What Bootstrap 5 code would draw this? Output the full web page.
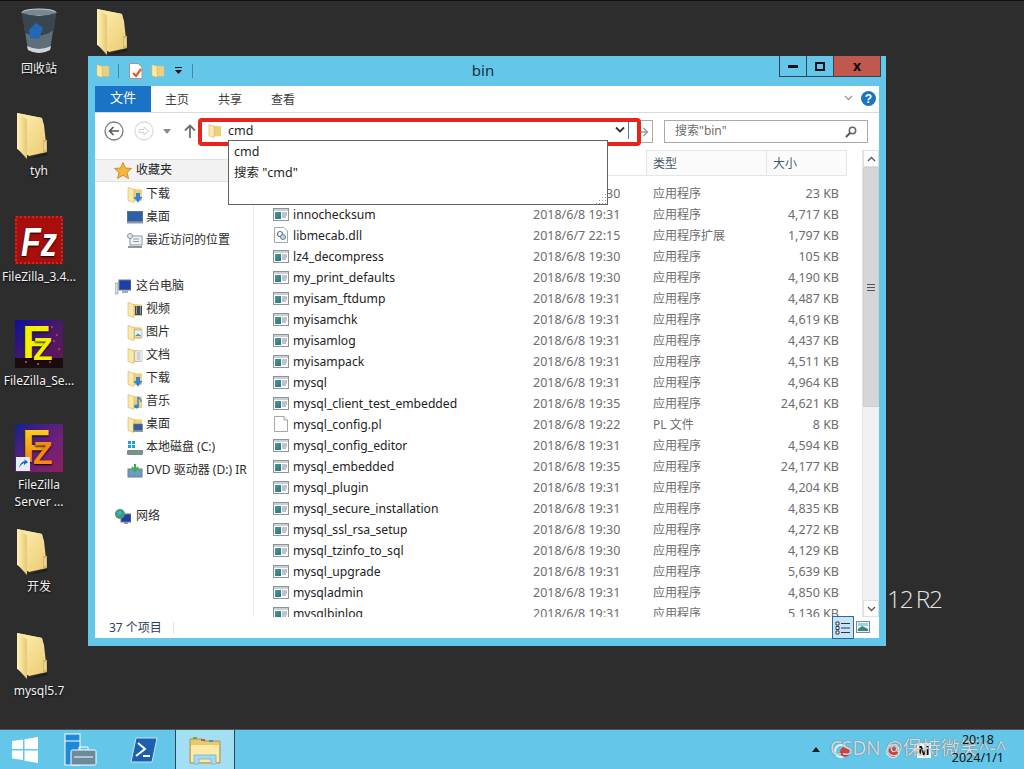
<!DOCTYPE html>
<html lang="zh-CN">
<head>
<meta charset="utf-8">
<title>bin</title>
<link href="https://cdn.jsdelivr.net/npm/bootstrap@5.3.0/dist/css/bootstrap.min.css" rel="stylesheet">
<style>
html,body{height:100%;margin:0;overflow:hidden}
body{background:#2d2d2d;font-family:"Noto Sans","Noto Sans CJK SC",sans-serif;font-size:12.5px;line-height:1.2;color:#1e1e1e;position:relative;width:1024px;height:769px}
.topline{height:1px;background:#111}
.dk{position:absolute;left:0;width:78px;text-align:center;color:#f2f2f2;font-size:12px;line-height:17px;text-shadow:0 1px 2px #000}
.dk svg{display:block;margin:0 auto 4px}
.dk .dfo{margin:0 0 3px 16px}
.p1{top:8px}.p2{top:113px}.p3{top:216px}.p4{top:320px}.p5{top:424px}.p6{top:529px}.p7{top:633px}
.dk-free{position:absolute;left:96px;top:9px}
.win{position:absolute;left:88px;top:56px;width:798px;height:590px;background:#64c7e9;padding:0 7px 8px;display:flex;flex-direction:column}
.w-title{height:30px;position:relative;flex:none}
.w-qa{position:absolute;left:1px;top:7px}
.w-sep{width:1px;height:14px;background:#3f8aa8}
.q1{margin-left:8px}.q2{margin-left:10px}.q3{margin-left:8px}.q4{margin-left:9px}.q5{margin-left:9px}
.w-name{text-align:center;font-size:15px;line-height:28px;color:#14343f;padding-right:8px}
.w-ctl{position:absolute;right:-2px;top:0;height:21px;border:1px solid #2c4756;border-top:0;display:flex}
.w-ctl span{display:flex;align-items:center;justify-content:center;height:20px;border-right:1px solid #2c4756}
.w-ctl .c1{width:27px}.w-ctl .c2{width:27px}.w-ctl .c3{width:46px;border:0;background:#c0584f;color:#111;font-weight:700;font-size:14px}
.w-body{flex:1;background:#fff;display:flex;flex-direction:column;min-height:0}
.r-tabs{height:27px;border-bottom:1px solid #dadbdc;flex:none;position:relative;display:flex;align-items:stretch}
.r-file{width:56px;height:26px;background:#1a73c4;color:#fff;font-size:13px;display:flex;align-items:center;justify-content:center;padding-bottom:2px}
.r-tab{color:#3c3c3c;position:absolute;top:7px;font-size:12px}
.t1{left:70px}.t2{left:123px}.t3{left:176px}
.r-help{position:absolute;right:3px;top:5px}
.r-chev{position:absolute;right:26px;top:9px}
.a-row{height:37px;flex:none;position:relative}
.a-box{position:absolute;left:107px;top:8px;width:426px;height:19px;display:flex;align-items:center;padding-left:6px;gap:6px;font-size:12.5px}
.a-go{position:absolute;left:540px;top:7px;width:18px;height:23px;border:1px solid #a9a9a9;border-left:0}
.a-goi{position:absolute;left:3px;top:6px}
.a-search{position:absolute;left:569px;top:7px;width:204px;height:23px;border:1px solid #a9a9a9;color:#6d6d6d;padding:3px 10px;font-size:12px;display:flex;justify-content:space-between;align-items:center}
.a-red{position:absolute;left:103px;top:5px;width:443px;height:28px;border:4px solid #e8231b;border-radius:4px}
.a-drop{position:absolute;left:520px;top:13px}
.a-div{position:absolute;left:533px;top:9px;width:1px;height:17px;background:#3f7fb3}
.n-svg{position:absolute}
.n1{left:9px;top:8px}.n2{left:39px;top:8px}.n3{left:68px;top:16px}.n4{left:89px;top:11px}
.m-wrap{flex:1;display:flex;min-height:0;position:relative}
.side{width:159px;flex:none;border-right:1px solid #ececec;padding-top:9px;overflow:hidden}
.s-fav{height:23px;background:#f2f2f2;border:1px solid #e2e2e2;border-left:0;border-right:0;margin-right:25px;margin-bottom:1px;display:flex;align-items:center;padding-left:19px;gap:4px;font-size:12px}
.s-it{height:23px;display:flex;align-items:center;gap:3px;padding-left:32px;font-size:12px;color:#2c2c2c;white-space:nowrap}
.s-top{padding-left:20px;gap:5px}
.s-gap{height:23px}
.list{flex:1;min-width:0;overflow:hidden;padding-left:11px;padding-right:15px}
.l-head{height:26px;display:flex;border:1px solid #e5e5e5;border-width:0 0 1px;background:#fff;margin-bottom:7px;font-size:12px;color:#4b5a6b}
.l-head div{display:flex;align-items:center;padding-left:6px;padding-top:2px;border-left:1px solid #e5e5e5;border-top:1px solid #e5e5e5;background:#fbfbfb}
.l-head .hn{width:381px;background:#fff;border:0}.l-head .ht{width:120px}.l-head .hs{width:81px;border-right:1px solid #e5e5e5}
.l-row{height:21px;display:grid;grid-template-columns:260px 120px 120px 66px;align-items:center;color:#6d6d6d;font-size:12.5px;white-space:nowrap;padding-left:8px}
.l-row .nm{display:flex;align-items:center;gap:4px;color:#222;font-size:12.15px;padding-top:2px}
.l-row .nm svg{margin-top:-2px}
.l-row .sz{text-align:right}
.l-row .ty{font-size:12px;padding-top:2px}
.scr{width:17px;flex:none;background:#f0f0f0;display:flex;flex-direction:column;border-left:1px solid #e6e6e6}
.scr-b{height:17px;background:#fff;display:flex;align-items:center;justify-content:center;border:1px solid #e0e0e0;flex:none}
.scr-t{height:240px;background:#d6d6d6;border:1px solid #d0d0d0;display:flex;align-items:center;justify-content:center;flex:none}
.scr-s{flex:1}
.st{height:21px;flex:none;position:relative;display:flex;align-items:center;padding-left:14px;padding-top:2px;color:#2e3f5c;font-size:12px}
.st-sep{position:absolute;left:78px;top:5px;width:1px;height:12px;background:#e6e6e6}
.st-det{position:absolute;left:737px;top:-1px;width:22px;height:23px;background:#c6e3f7;border:1px solid #2f6a93;display:flex;align-items:center;justify-content:center}
.st-pic{position:absolute;left:761px;top:4px}
.pop{position:absolute;left:228px;top:140px;width:380px;height:65px;background:#fff;border:1px solid #646464;padding:0 5px;font-size:12.5px;line-height:21px;z-index:5}
.pop-g{position:absolute;right:0;bottom:0}
.brand{position:absolute;left:887px;top:583px;color:#e4e4e4;font-size:24.500px;line-height:32px;letter-spacing:-1.2px;word-spacing:-2px;font-family:"Open Sans",sans-serif;font-weight:300}
.tb{position:absolute;left:0;right:0;top:729px;height:40px;background:#64c7e9;border-top:1px solid #555;display:flex;align-items:stretch}
.tb-i{display:flex;align-items:center;justify-content:center;flex:none}
.w49{width:49px}.w63{width:63px}
.tb-act{width:60px;background:#a3dff3;border-left:1px solid #29485a;border-right:1px solid #29485a}
.tray{position:absolute;right:0;top:0;bottom:0;width:215px}
.tr-up{position:absolute;left:3px;top:17px;width:0;height:0;border:4px solid transparent;border-bottom:5px solid #1a1a1a;border-top:0}
.tr-time{position:absolute;right:20px;top:1px;text-align:center;font-size:12.5px;line-height:18px;color:#111}
.tr-m{position:absolute;left:108px;top:13px;width:14px;height:15px;background:#fff;font-size:12px;line-height:15px;text-align:center;color:#000;font-weight:700}
.tr-dot{position:absolute;width:10px;height:10px;border-radius:50%;background:#d4423a;top:17px}
.d1{left:31px}.d2{left:79px}
.tr-ring{position:absolute;width:14px;height:14px;border-radius:50%;border:2px solid #f2f2f2;top:14px}
.r1{left:25px}.r2{left:77px}
.tr-wm{position:absolute;left:21px;top:6px;font-size:19px;line-height:24px;color:#eef3f5d9;white-space:nowrap;text-shadow:0 0 1px #444}
</style>
</head>
<body>
<svg width="0" height="0" class="position-absolute">
<defs>
<linearGradient id="gf" x1="0" y1="0" x2="1" y2="1"><stop offset="0" stop-color="#fdf0b4"/><stop offset="1" stop-color="#eccb72"/></linearGradient>
<linearGradient id="gl" x1="0" y1="0" x2="1" y2="0"><stop offset="0" stop-color="#fff2bd"/><stop offset="1" stop-color="#e8c872"/></linearGradient>
<linearGradient id="gx" x1="0" y1="0" x2="1" y2="1"><stop offset="0" stop-color="#4a9d7c"/><stop offset="1" stop-color="#2c6f9a"/></linearGradient>
<symbol id="dfold" viewBox="0 0 32 46"><path d="M1 0 26 5 28 12 31 39 13 43 1 36Z" fill="url(#gf)"/><path d="M27 27h4v12h-4z" fill="#d8b85f"/><path d="M28.500 29h1v8h-1z" fill="#f5f5e0"/><path d="M1 0 11 6V46L1 35Z" fill="url(#gl)"/><path d="M1 0 26 5 11 6Z" fill="#f9e9a8"/><path d="M11 46 31 40 32 42 13 46Z" fill="#000" opacity=".3"/></symbol>
<symbol id="sfold" viewBox="0 0 16 16"><path d="M6 2 15 2.500V14H6Z" fill="#edcf7c"/><path d="M1 .5 7 2.500V15.500L1 13.500Z" fill="#fbe9a7" stroke="#c9a550" stroke-width=".5"/></symbol>
<symbol id="fdl" viewBox="0 0 16 16"><use href="#sfold"/><path d="M9 6H13V10H15.500L11 15.500 6.500 10H9Z" fill="#2f86d4"/></symbol>
<symbol id="fvid" viewBox="0 0 16 16"><use href="#sfold"/><rect x="8" y="4" width="7" height="9" fill="#3d4a52"/><path d="M9 5h1M9 7h1M9 9h1M9 11h1M13 5h1M13 7h1M13 9h1M13 11h1" stroke="#dfe6ea"/></symbol>
<symbol id="fpic" viewBox="0 0 16 16"><use href="#sfold"/><rect x="7.500" y="5" width="7.500" height="7" fill="#e8f3f6" stroke="#95a6ad" stroke-width=".6"/><path d="M8 11 11 8.500 14.500 11Z" fill="#4c9b8f"/></symbol>
<symbol id="fdoc" viewBox="0 0 16 16"><use href="#sfold"/><rect x="8" y="3" width="7" height="10" fill="#fff" stroke="#a7b0b6" stroke-width=".6"/><path d="M9.500 5h4M9.500 7h4M9.500 9h4M9.500 11h4" stroke="#7f8e98" stroke-width=".8"/></symbol>
<symbol id="fmus" viewBox="0 0 16 16"><use href="#sfold"/><path d="M11 3V12" stroke="#2f86d4" stroke-width="1.500"/><ellipse cx="9.500" cy="12.500" rx="2.500" ry="2" fill="#2f86d4"/><path d="M11 3Q14 5 14 8" fill="none" stroke="#2f86d4" stroke-width="1.300"/></symbol>
<symbol id="fdsk" viewBox="0 0 16 16"><use href="#sfold"/><rect x="6.500" y="7" width="9" height="6.500" fill="#355f96" stroke="#6d7f8c" stroke-width=".6"/><rect x="6" y="13.500" width="10" height="1.500" fill="#8d9aa5"/></symbol>
<symbol id="exe" viewBox="0 0 16 13"><rect x=".5" y=".5" width="15" height="12" fill="#fff" stroke="#8d9499"/><rect x="1" y="1" width="14" height="2" fill="#c9d0d5"/><rect x="2" y="4" width="6" height="7" fill="url(#gx)"/><path d="M9 5h5M9 7h5M9 9h4" stroke="#7b8a94"/></symbol>
<symbol id="doc" viewBox="0 0 14 16"><path d="M.5.5H10L13.500 4V15.500H.5Z" fill="#fff" stroke="#a7a7a7"/><path d="M10 .5V4H13.500" fill="#eee" stroke="#a7a7a7"/></symbol>
<symbol id="dll" viewBox="0 0 14 16"><path d="M.5.5H10L13.500 4V15.500H.5Z" fill="#fff" stroke="#a7a7a7"/><circle cx="6" cy="7" r="2.500" fill="none" stroke="#5f7f99" stroke-width="1.200"/><circle cx="9" cy="10" r="2.500" fill="#c8d6e0" stroke="#5f7f99"/></symbol>
</defs>
</svg>
<div class="topline"></div>

<!-- desktop icons -->
<div class="dk p1"><svg width="40" height="48" viewBox="0 0 40 48"><ellipse cx="20" cy="4.500" rx="17" ry="3.500" fill="#778892" stroke="#c5d0d6"/><path d="M3 5 9 42Q20 48 31 42L37 5Q20 11 3 5Z" fill="#5e6f7a"/><path d="M3 5 6 25Q20 32 35 22L37 5Q20 11 3 5Z" fill="#39464f"/><path d="M10 22 17 15 24 20 20 31 11 30Z" fill="#2467b5"/><path d="M8 38Q20 44 32 38L31 42Q20 48 9 42Z" fill="#cfd6da"/></svg><span>回收站</span></div>
<svg class="dk-free" width="32" height="46"><use href="#dfold"/></svg>
<div class="dk p2"><svg class="dfo" width="32" height="46"><use href="#dfold"/></svg><span class="d-block">tyh</span></div>
<div class="dk p3"><svg width="48" height="48" viewBox="0 0 48 48"><rect width="48" height="48" fill="#a70e0c"/><rect x="1" y="1" width="46" height="46" fill="none" stroke="#c72a24" stroke-dasharray="2 2" stroke-width="2"/><text x="6" y="40" font-family="Liberation Sans" font-weight="700" font-style="italic" font-size="40" fill="#fff" textLength="36" lengthAdjust="spacingAndGlyphs">Fz</text></svg><span>FileZilla_3.4...</span></div>
<div class="dk p4"><svg width="48" height="48" viewBox="0 0 48 48"><defs><linearGradient id="g2" x1="0" y1="0" x2="1" y2="1"><stop offset="0" stop-color="#0d0f9c"/><stop offset=".5" stop-color="#451b6a"/><stop offset="1" stop-color="#6a1552"/></linearGradient></defs><rect width="48" height="48" fill="url(#g2)"/><rect y="38" width="48" height="10" fill="#1a0b0e"/><path d="M36 6h2v2h-2zM41 14h2v2h-2zM38 20h2v2h-2zM43 28h2v2h-2zM10 41h2v2h-2zM22 43h2v2h-2zM34 41h2v2h-2z" fill="#c2304a"/><text x="7" y="38" font-family="Liberation Sans" font-weight="700" font-size="46" fill="#f4f000">F</text><text x="18" y="40" font-family="Liberation Sans" font-weight="700" font-size="32" fill="#f4f000">Z</text></svg><span>FileZilla_Se...</span></div>
<div class="dk p5"><svg width="48" height="48" viewBox="0 0 48 48"><defs><linearGradient id="g3" x1="0" y1="0" x2="1" y2="1"><stop offset="0" stop-color="#18208c"/><stop offset=".6" stop-color="#6f2078"/><stop offset="1" stop-color="#8d1e5c"/></linearGradient><linearGradient id="g4" x1="0" y1="0" x2="0" y2="1"><stop offset="0" stop-color="#ffe420"/><stop offset="1" stop-color="#f06a10"/></linearGradient></defs><rect width="48" height="48" fill="url(#g3)"/><text x="7" y="38" font-family="Liberation Sans" font-weight="700" font-size="46" fill="url(#g4)">F</text><text x="18" y="40" font-family="Liberation Sans" font-weight="700" font-size="32" fill="#f58a12">Z</text><rect x="1" y="33" width="14" height="14" fill="#e6edf3"/><path d="M4 44Q5 38 10 37L9 35 13 38 9 41 9 39Q6 40 4 44Z" fill="#1d63b8"/></svg><span>FileZilla<br>Server ...</span></div>
<div class="dk p6"><svg class="dfo" width="32" height="46"><use href="#dfold"/></svg><span class="d-block">开发</span></div>
<div class="dk p7"><svg class="dfo" width="32" height="46"><use href="#dfold"/></svg><span class="d-block">mysql5.7</span></div>

<div class="brand">12 R2</div>

<!-- explorer window -->
<div class="win">
  <div class="w-title">
    <div class="w-qa d-flex align-items-center">
      <svg width="14" height="16"><use href="#sfold"/></svg><span class="w-sep q1"></span>
      <svg class="q2" width="14" height="16" viewBox="0 0 14 16"><path d="M.5.5H9L13 4V15.500H.5Z" fill="#fff" stroke="#999"/><path d="M4 10 7 13 12 6" fill="none" stroke="#d9622b" stroke-width="2.200"/></svg>
      <svg class="q3" width="14" height="16"><use href="#sfold"/></svg>
      <svg class="q4" width="9" height="8" viewBox="0 0 9 8"><path d="M1 0h7v1H1zM1 3h7L4.500 7Z" fill="#111"/></svg><span class="w-sep q5"></span>
    </div>
    <div class="w-name">bin</div>
    <div class="w-ctl">
      <span class="c1"><svg width="10" height="4"><rect width="10" height="3" y="1" fill="#111"/></svg></span>
      <span class="c2"><svg width="10" height="9"><rect x="1" y="1" width="8" height="7" fill="none" stroke="#111" stroke-width="2"/></svg></span>
      <span class="c3">x</span>
    </div>
  </div>
  <div class="w-body">
    <div class="r-tabs">
      <div class="r-file">文件</div>
      <span class="r-tab t1">主页</span>
      <span class="r-tab t2">共享</span>
      <span class="r-tab t3">查看</span>
      <svg class="r-chev" width="9" height="6" viewBox="0 0 9 6"><path d="M1 1 4.500 4.500 8 1" fill="none" stroke="#9a9a9a" stroke-width="1.300"/></svg>
      <svg class="r-help" width="15" height="15" viewBox="0 0 15 15"><circle cx="7.500" cy="7.500" r="7.500" fill="#1b74c5"/><text x="7.500" y="12" text-anchor="middle" font-family="Liberation Sans" font-weight="700" font-size="12" fill="#fff">?</text></svg>
    </div>
    <div class="a-row">
      <svg class="n-svg n1" width="20" height="20" viewBox="0 0 20 20"><circle cx="10" cy="10" r="9" fill="#fff" stroke="#7d7d7d" stroke-width="1.300"/><path d="M15 10H6M9.500 6 5.500 10 9.500 14" fill="none" stroke="#555" stroke-width="1.600"/></svg>
      <svg class="n-svg n2" width="20" height="20" viewBox="0 0 20 20"><circle cx="10" cy="10" r="9" fill="#fff" stroke="#dcdcdc" stroke-width="1.300"/><path d="M5 8.500H10V6L14.500 10 10 14V11.500H5Z" fill="none" stroke="#cfcfcf"/></svg>
      <svg class="n-svg n3" width="8" height="5" viewBox="0 0 8 5"><path d="M0 0H8L4 5Z" fill="#8a8a8a"/></svg>
      <svg class="n-svg n4" width="12" height="14" viewBox="0 0 12 14"><path d="M6 14V2M1 6.500 6 1.500 11 6.500" fill="none" stroke="#6f6f6f" stroke-width="1.800"/></svg>
      <div class="a-box"><svg width="14" height="16"><use href="#sfold"/></svg><span>cmd</span></div>
      <svg class="a-drop" width="10" height="8" viewBox="0 0 10 8"><path d="M1 1.500 5 5.500 9 1.500" fill="none" stroke="#333" stroke-width="1.800"/></svg>
      <span class="a-div"></span>
      <div class="a-go"><svg class="a-goi" width="11" height="10" viewBox="0 0 11 10"><path d="M0 5H9M5.500 1 9.500 5 5.500 9" fill="none" stroke="#9c9c9c" stroke-width="1.500"/></svg></div>
      <div class="a-search"><span>搜索"bin"</span><svg width="12" height="12" viewBox="0 0 12 12"><circle cx="7.500" cy="4.500" r="3.200" fill="none" stroke="#666" stroke-width="1.500"/><path d="M5 7 1 11" stroke="#555" stroke-width="2"/></svg></div>
      <div class="a-red"></div>
    </div>
    <div class="m-wrap">
      <div class="side">
        <div class="s-fav"><svg width="18" height="17" viewBox="0 0 18 17"><path d="M9 .5 11.500 6 17.500 6.500 13 10.500 14.500 16.500 9 13.300 3.500 16.500 5 10.500 .5 6.500 6.500 6Z" fill="#f4b73d" stroke="#d98a2b"/></svg><span>收藏夹</span></div>
        <div class="s-it"><svg width="16" height="16"><use href="#fdl"/></svg><span>下载</span></div>
        <div class="s-it"><svg width="16" height="13" viewBox="0 0 16 13"><rect x=".5" y=".5" width="15" height="10" fill="#2c5fa8" stroke="#5d7489"/><rect y="10.500" width="16" height="2" fill="#8d9aa5"/></svg><span>桌面</span></div>
        <div class="s-it"><svg width="16" height="15" viewBox="0 0 16 15"><rect x="3" y="3" width="12" height="9" fill="#eef2f5" stroke="#8e979e"/><path d="M6 6h6M6 8.500h6" stroke="#7aa0b8"/><circle cx="3" cy="3" r="2.500" fill="#dfe5e8" stroke="#8e979e"/><path d="M1 14h14" stroke="#8e979e" stroke-width="2"/></svg><span>最近访问的位置</span></div>
        <div class="s-gap"></div>
        <div class="s-it s-top"><svg width="16" height="16" viewBox="0 0 16 16"><rect x="4" y="1" width="12" height="10" fill="#1f3fa6" stroke="#6c7b88"/><rect x="7" y="11" width="6" height="3" fill="#a2adb6"/><rect y="4" width="3" height="11" fill="#d7dde0" stroke="#6c7b88" stroke-width=".5"/></svg><span>这台电脑</span></div>
        <div class="s-it"><svg width="16" height="16"><use href="#fvid"/></svg><span>视频</span></div>
        <div class="s-it"><svg width="16" height="16"><use href="#fpic"/></svg><span>图片</span></div>
        <div class="s-it"><svg width="16" height="16"><use href="#fdoc"/></svg><span>文档</span></div>
        <div class="s-it"><svg width="16" height="16"><use href="#fdl"/></svg><span>下载</span></div>
        <div class="s-it"><svg width="16" height="16"><use href="#fmus"/></svg><span>音乐</span></div>
        <div class="s-it"><svg width="16" height="16"><use href="#fdsk"/></svg><span>桌面</span></div>
        <div class="s-it"><svg width="16" height="16" viewBox="0 0 16 16"><path d="M1 1h3v3H1zM5 1h3v3H5zM1 5h3v3H1zM5 5h3v3H5z" fill="#16a3e0"/><rect y="10" width="16" height="5" rx="1" fill="#7f8b92"/><rect x="7" y="12" width="6" height="1.500" fill="#4fbb4a"/></svg><span>本地磁盘 (C:)</span></div>
        <div class="s-it"><svg width="16" height="16" viewBox="0 0 16 16"><rect x="1" y="6" width="14" height="8" fill="#6b9cc4" stroke="#68808f"/><path d="M8 1V6M5 4 8 8 11 4" fill="none" stroke="#3dad4a" stroke-width="2"/></svg><span>DVD 驱动器 (D:) IR</span></div>
        <div class="s-gap"></div>
        <div class="s-it s-top"><svg width="16" height="16" viewBox="0 0 16 16"><rect x="6" y="5" width="10" height="8" fill="#1f3fa6" stroke="#6c7b88"/><circle cx="5" cy="5" r="5" fill="#3f9a6e"/><path d="M2 3 6 2 7 5 3 7Z" fill="#4aa8d8"/><rect x="9" y="13" width="4" height="2" fill="#8d9aa5"/></svg><span>网络</span></div>
      </div>
      <div class="list">
        <div class="l-head"><div class="hn"></div><div class="ht">类型</div><div class="hs">大小</div></div>
        <div class="l-row"><span class="nm"><svg width="16" height="13"><use href="#exe"/></svg>comp_err</span><span>2018/6/8 19:30</span><span class="ty">应用程序</span><span class="sz">23 KB</span></div>
        <div class="l-row"><span class="nm"><svg width="16" height="13"><use href="#exe"/></svg>innochecksum</span><span>2018/6/8 19:31</span><span class="ty">应用程序</span><span class="sz">4,717 KB</span></div>
        <div class="l-row"><span class="nm"><svg width="16" height="16"><use href="#dll"/></svg>libmecab.dll</span><span>2018/6/7 22:15</span><span class="ty">应用程序扩展</span><span class="sz">1,797 KB</span></div>
        <div class="l-row"><span class="nm"><svg width="16" height="13"><use href="#exe"/></svg>lz4_decompress</span><span>2018/6/8 19:30</span><span class="ty">应用程序</span><span class="sz">105 KB</span></div>
        <div class="l-row"><span class="nm"><svg width="16" height="13"><use href="#exe"/></svg>my_print_defaults</span><span>2018/6/8 19:30</span><span class="ty">应用程序</span><span class="sz">4,190 KB</span></div>
        <div class="l-row"><span class="nm"><svg width="16" height="13"><use href="#exe"/></svg>myisam_ftdump</span><span>2018/6/8 19:31</span><span class="ty">应用程序</span><span class="sz">4,487 KB</span></div>
        <div class="l-row"><span class="nm"><svg width="16" height="13"><use href="#exe"/></svg>myisamchk</span><span>2018/6/8 19:31</span><span class="ty">应用程序</span><span class="sz">4,619 KB</span></div>
        <div class="l-row"><span class="nm"><svg width="16" height="13"><use href="#exe"/></svg>myisamlog</span><span>2018/6/8 19:31</span><span class="ty">应用程序</span><span class="sz">4,437 KB</span></div>
        <div class="l-row"><span class="nm"><svg width="16" height="13"><use href="#exe"/></svg>myisampack</span><span>2018/6/8 19:31</span><span class="ty">应用程序</span><span class="sz">4,511 KB</span></div>
        <div class="l-row"><span class="nm"><svg width="16" height="13"><use href="#exe"/></svg>mysql</span><span>2018/6/8 19:31</span><span class="ty">应用程序</span><span class="sz">4,964 KB</span></div>
        <div class="l-row"><span class="nm"><svg width="16" height="13"><use href="#exe"/></svg>mysql_client_test_embedded</span><span>2018/6/8 19:35</span><span class="ty">应用程序</span><span class="sz">24,621 KB</span></div>
        <div class="l-row"><span class="nm"><svg width="16" height="16"><use href="#doc"/></svg>mysql_config.pl</span><span>2018/6/8 19:22</span><span class="ty">PL 文件</span><span class="sz">8 KB</span></div>
        <div class="l-row"><span class="nm"><svg width="16" height="13"><use href="#exe"/></svg>mysql_config_editor</span><span>2018/6/8 19:31</span><span class="ty">应用程序</span><span class="sz">4,594 KB</span></div>
        <div class="l-row"><span class="nm"><svg width="16" height="13"><use href="#exe"/></svg>mysql_embedded</span><span>2018/6/8 19:35</span><span class="ty">应用程序</span><span class="sz">24,177 KB</span></div>
        <div class="l-row"><span class="nm"><svg width="16" height="13"><use href="#exe"/></svg>mysql_plugin</span><span>2018/6/8 19:31</span><span class="ty">应用程序</span><span class="sz">4,204 KB</span></div>
        <div class="l-row"><span class="nm"><svg width="16" height="13"><use href="#exe"/></svg>mysql_secure_installation</span><span>2018/6/8 19:31</span><span class="ty">应用程序</span><span class="sz">4,835 KB</span></div>
        <div class="l-row"><span class="nm"><svg width="16" height="13"><use href="#exe"/></svg>mysql_ssl_rsa_setup</span><span>2018/6/8 19:30</span><span class="ty">应用程序</span><span class="sz">4,272 KB</span></div>
        <div class="l-row"><span class="nm"><svg width="16" height="13"><use href="#exe"/></svg>mysql_tzinfo_to_sql</span><span>2018/6/8 19:30</span><span class="ty">应用程序</span><span class="sz">4,129 KB</span></div>
        <div class="l-row"><span class="nm"><svg width="16" height="13"><use href="#exe"/></svg>mysql_upgrade</span><span>2018/6/8 19:31</span><span class="ty">应用程序</span><span class="sz">5,639 KB</span></div>
        <div class="l-row"><span class="nm"><svg width="16" height="13"><use href="#exe"/></svg>mysqladmin</span><span>2018/6/8 19:31</span><span class="ty">应用程序</span><span class="sz">4,850 KB</span></div>
        <div class="l-row"><span class="nm"><svg width="16" height="13"><use href="#exe"/></svg>mysqlbinlog</span><span>2018/6/8 19:31</span><span class="ty">应用程序</span><span class="sz">5,136 KB</span></div>
      </div>
      <div class="scr">
        <div class="scr-b"><svg width="9" height="6" viewBox="0 0 9 6"><path d="M1 5 4.500 1.500 8 5" fill="none" stroke="#555" stroke-width="1.300"/></svg></div>
        <div class="scr-t"><svg width="8" height="7" viewBox="0 0 8 7"><path d="M0 .5h8M0 3.500h8M0 6.500h8" stroke="#555"/></svg></div>
        <div class="scr-s"></div>
        <div class="scr-b"><svg width="9" height="6" viewBox="0 0 9 6"><path d="M1 1 4.500 4.500 8 1" fill="none" stroke="#555" stroke-width="1.300"/></svg></div>
      </div>
    </div>
    <div class="st">37 个项目<span class="st-sep"></span>
      <div class="st-det"><svg width="16" height="14" viewBox="0 0 16 14"><path d="M1 1h3v3H1zM1 5.500h3v3H1zM1 10h3v3H1z" fill="#fff" stroke="#334"/><path d="M6 2.500h9M6 7h9M6 11.500h9" stroke="#334"/></svg></div>
      <svg class="st-pic" width="14" height="12" viewBox="0 0 14 12"><rect x=".5" y=".5" width="13" height="11" fill="#e6f1f5" stroke="#7b8a94"/><path d="M2 8 6 5 12 8V10H2Z" fill="#3a8578"/><rect x="2" y="2" width="10" height="3" fill="#9fd1e6"/></svg>
    </div>
  </div>
</div>

<!-- address suggestion menu -->
<div class="pop"><div>cmd</div><div>搜索 "cmd"</div>
  <svg class="pop-g" width="12" height="12" viewBox="0 0 12 12"><path d="M10 2h1v1h-1zM7 5h1v1H7zM10 5h1v1h-1zM4 8h1v1H4zM7 8h1v1H7zM10 8h1v1h-1zM1 11h1v1H1zM4 11h1v1H4zM7 11h1v1H7zM10 11h1v1h-1z" fill="#9a9a9a"/></svg>
</div>

<!-- taskbar -->
<div class="tb">
  <div class="tb-i w49"><svg width="28" height="28" viewBox="0 0 28 28"><path d="M1 5 12 3.500V13H1ZM13.500 3.300 27 1V13H13.500ZM1 14.500H12V24L1 22.500ZM13.500 14.500H27V27L13.500 24.700Z" fill="#fff"/></svg></div>
  <div class="tb-i w63"><svg width="33" height="33" viewBox="0 0 33 33"><rect x="1" y="1" width="15" height="31" fill="#1e88d9" stroke="#fff"/><path d="M1 8H16" stroke="#fff"/><rect x="7" y="17" width="25" height="15" rx="1.500" fill="#6b8a9c" stroke="#fff"/><path d="M15 17V14H24V17M10 24H29" fill="none" stroke="#fff"/></svg></div>
  <div class="tb-i w63"><svg width="28" height="26" viewBox="0 0 28 26"><path d="M6 1H27L22 25H1Z" fill="#1b5fae" stroke="#c9e1f4"/><path d="M8 6 15 12 6 19M13 19H20" fill="none" stroke="#fff" stroke-width="2"/></svg></div>
  <div class="tb-i tb-act"><svg width="32" height="30" viewBox="0 0 32 30"><path d="M1 4H13L15 6H31V28H1Z" fill="#e9c874" stroke="#b5924a"/><path d="M2 10H30V27H2Z" fill="#fbeba6"/><rect x="4" y="2" width="4" height="2" fill="#59b64a"/><rect x="12" y="4" width="4" height="2" fill="#c25a32"/><rect x="20" y="5" width="4" height="2" fill="#3f9ab0"/><path d="M5 29V20H27V29H22V24H10V29Z" fill="#a8d8ec" stroke="#7ebad4"/></svg></div>
  <div class="tray">
    <span class="tr-up"></span>
    <span class="tr-ring r1"></span>
    <span class="tr-ring r2"></span>
    <span class="tr-dot d1"></span>
    <span class="tr-dot d2"></span>
    <span class="tr-m">M</span>
    <div class="tr-wm">CSDN @保持微笑^-^</div>
    <div class="tr-time">20:18<br>2024/1/1</div>
  </div>
</div>
</body>
</html>
